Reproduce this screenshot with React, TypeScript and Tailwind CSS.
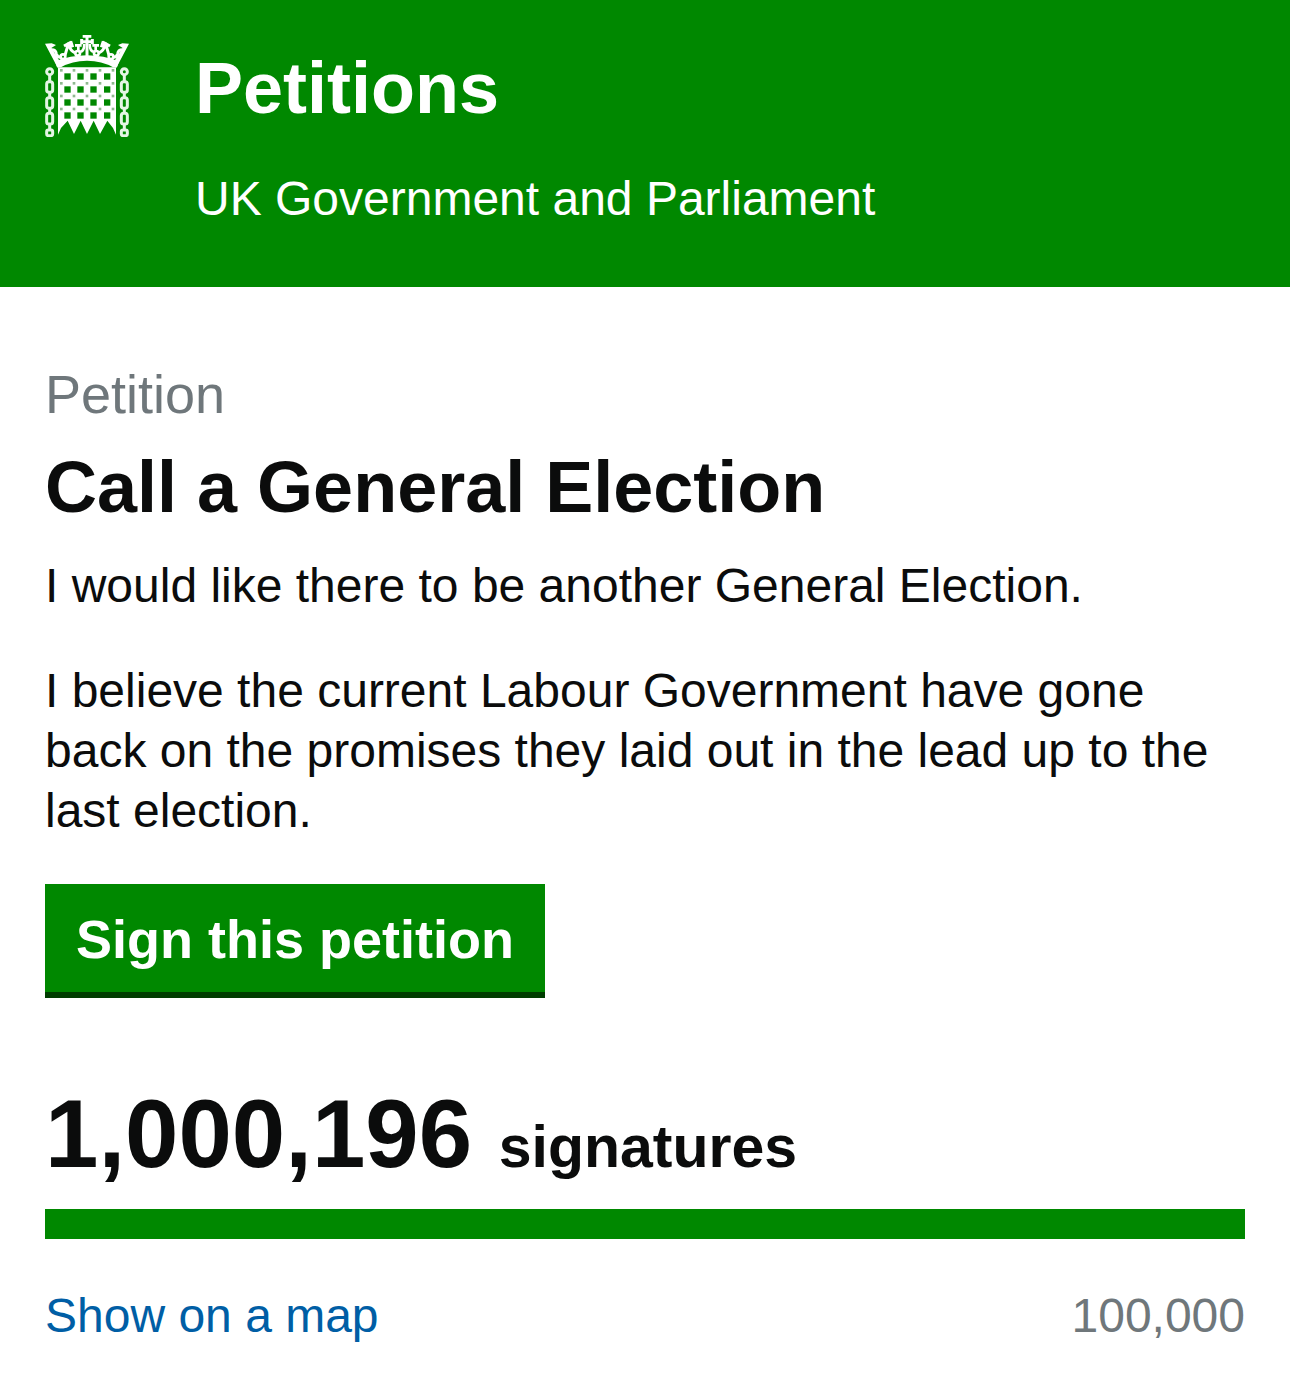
const squareColumns = [82, 121, 160, 201];
const squareRows = [136, 175, 214, 253];
const studColumns = [69, 107, 146, 185, 224];
const studRows = [123, 162, 200, 239];
const chainColumns = [38, 262];
const chainLinks = [177, 225, 272];

// One side of the crown, mirrored for the other
function CrownHalf() {
    return (
        <>
            <path fill="#fff" d="M24 47L44 46L57 51L43 60L76 112L62 119Z" />
            <path
                fill="none"
                stroke="#fff"
                strokeWidth="9"
                d="M42 65Q56 64 58 77Q60 88 72 88M84 82L95 44M81 54L103 42M95 50Q100 68 113 74M101 40L107 58"
            />
            <path fill="none" stroke="#fff" strokeWidth="8" d="M114 52L134 52M124 50V70M128 72Q142 70 142 48" />
            <g fill="#080" stroke="#fff" strokeWidth="8">
                <circle cx="78" cy="86" r="7" />
                <circle cx="122" cy="76" r="7" />
            </g>
        </>
    );
}

function Portcullis() {
    return (
        <svg viewBox="24 21 252 306" className="h-[102px] w-[84px] shrink-0" aria-hidden="true">
            {/* Crown */}
            <CrownHalf />
            <g transform="translate(300 0) scale(-1 1)">
                <CrownHalf />
            </g>
            <path
                fill="#fff"
                d="M60 118L54 100Q100 82 150 82Q200 82 246 100L240 118L228 118Q195 98 150 98Q105 98 72 118Z"
            />
            <path
                fill="none"
                stroke="#fff"
                strokeWidth="9"
                d="M150 22V88M137 25H163M132 41H168M134 33V49M166 33V49"
            />

            {/* Grille */}
            <path
                fill="#fff"
                d="M63 118H237V320L228 300L211 278L189 318L170 278L150 318L131 278L111 318L92 278L72 300L63 320Z"
            />
            {squareRows.map((y) =>
                squareColumns.map((x) => (
                    <rect key={`${x}-${y}`} x={x} y={y} width="19" height="19" fill="#080" />
                ))
            )}
            {studRows.map((y) =>
                studColumns.map((x) => (
                    <rect key={`${x}-${y}`} x={x} y={y} width="8" height="8" fill="#8fb98f" />
                ))
            )}

            {/* Chains */}
            {chainColumns.map((x) => (
                <g key={x} fill="none" stroke="#e4f6e4" strokeWidth="9">
                    <circle cx={x} cy="131" r="9" />
                    {chainLinks.map((y) => (
                        <rect key={y} x={x - 9} y={y - 16} width="18" height="32" rx="7" />
                    ))}
                    <path d={`M${x} 140V161M${x} 193V209M${x} 241V256M${x} 288V306`} />
                    <rect x={x - 9} y="306" width="18" height="17" rx="5" />
                </g>
            ))}
        </svg>
    );
}

export default function App() {
    return (
        <div className="min-h-screen bg-white font-['Helvetica_Neue','Liberation_Sans',Arial,sans-serif] text-[48px] leading-[60px] text-[#0b0c0c]">
            <header className="flex gap-[66px] bg-[#080] px-[45px] pt-[35px] pb-[58px] text-white">
                <Portcullis />
                <div>
                    <a href="#" className="block pt-4 text-[72px] leading-[75px] font-bold">
                        Petitions
                    </a>
                    <p className="pt-[43px]">UK Government and Parliament</p>
                </div>
            </header>

            <main className="px-[45px] pt-[74px] pb-12">
                <h1 className="text-[72px] leading-[75px] font-bold">
                    <span className="block text-[54px] leading-[66px] font-normal text-[#6f777b]">
                        Petition
                    </span>
                    <span className="block pt-[23px]">Call a General Election</span>
                </h1>

                <p className="pt-[31px]">I would like there to be another General Election.</p>
                <p className="pt-[45px]">
                    I believe the current Labour Government have gone back on the promises they laid out
                    in the lead up to the last election.
                </p>

                <button
                    type="button"
                    className="mt-[43px] block border-b-6 border-[#003d00] bg-[#080] px-[31px] pt-[25px] pb-[23px] text-[54px] leading-[60px] font-bold text-white"
                >
                    Sign this petition
                </button>

                {/* Signature count */}
                <p className="pt-[88px] text-[59px] leading-[96px] font-bold">
                    <span className="text-[96px]">1,000,196 </span>signatures
                </p>
                <div className="mt-[14px] h-[30px] bg-[#080]"></div>

                <div className="flex justify-between pt-[47px]">
                    <a href="#" className="text-[#005ea5]">Show on a map</a>
                    <span className="text-[#6f777b]">100,000</span>
                </div>
            </main>
        </div>
    );
}
